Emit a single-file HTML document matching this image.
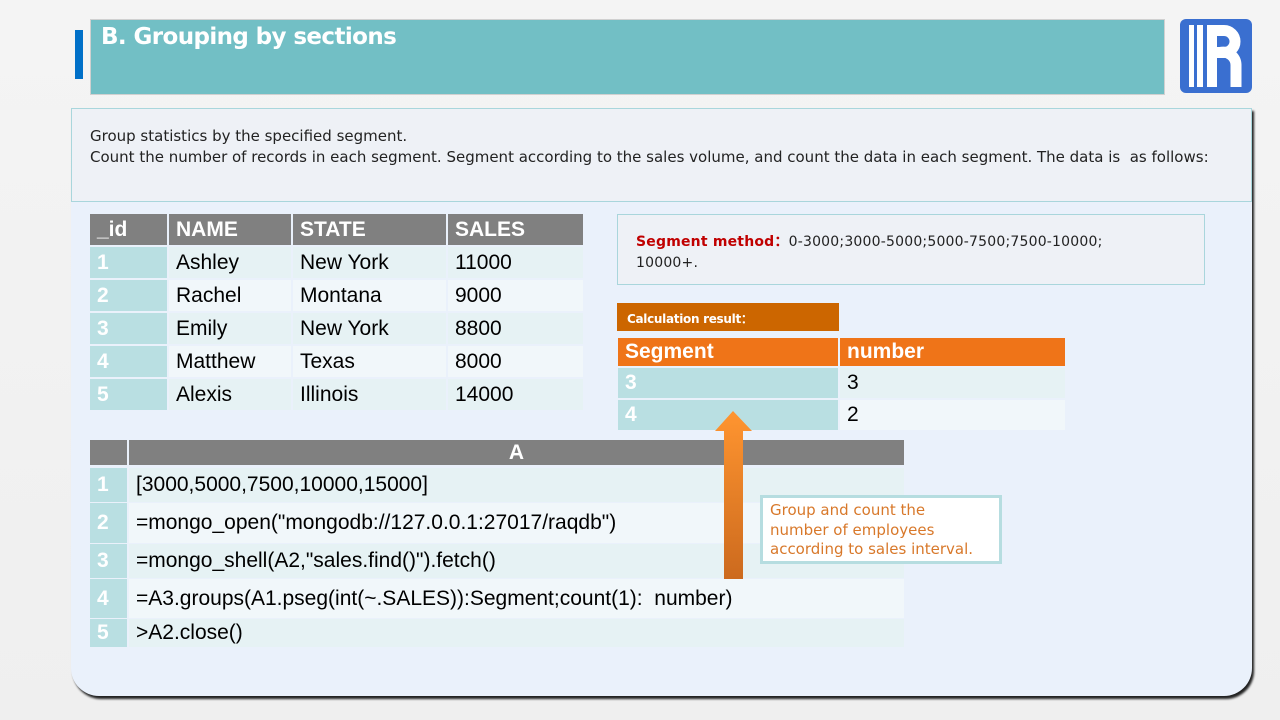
<!DOCTYPE html>
<html><head><meta charset="utf-8"><style>
*{margin:0;padding:0;box-sizing:border-box}
body{width:1280px;height:720px;overflow:hidden;background:linear-gradient(180deg,#f4f4f4,#efefef);position:relative;font-family:"Liberation Sans",Arial,sans-serif}
.a{position:absolute}
.cell{position:absolute;font-size:21px;color:#000;padding-left:7px;display:flex;align-items:center}
.num{color:#fff;font-weight:bold}
.hd{background:#808080;color:#fff;font-weight:bold}
</style></head><body>
<div class="a" style="left:75px;top:30px;width:8px;height:49px;background:#0070c8"></div>
<div class="a" style="left:90px;top:19px;width:1075px;height:76px;background:#72bfc5;border:1px solid #d0d0d0"></div>
<div class="a" style="left:101px;top:24px;color:#fff;font:bold 23px 'DejaVu Sans',sans-serif;letter-spacing:-0.6px">B. Grouping by sections</div>
<svg class="a" style="left:1180px;top:19px" width="72" height="74" viewBox="0 0 72 74">
<rect x="0" y="0" width="72" height="74" rx="6" fill="#3a6fd0"/>
<rect x="9" y="6" width="5" height="62" fill="#fff"/><rect x="17" y="6" width="6" height="62" fill="#fff"/>
<rect x="27" y="6" width="10" height="62" fill="#fff"/>
<path d="M32 11.5 H44 A11 11 0 0 1 44 33.5 H32" fill="none" stroke="#fff" stroke-width="11"/>
<path d="M40 33.5 A13 13 0 0 1 56 46 V68" fill="none" stroke="#fff" stroke-width="11"/>
</svg>
<div class="a" style="left:71px;top:108px;width:1181px;height:588px;background:#eaf1fb;border-radius:0 0 28px 28px;box-shadow:2px 3px 2px #222"></div>
<div class="a" style="left:71px;top:108px;width:1181px;height:94px;background:#eef1f6;border:1px solid #a9d6dc"></div>
<div class="a" style="left:90px;top:126px;font:15px 'DejaVu Sans',sans-serif;color:#222;line-height:21px;letter-spacing:0">Group statistics by the specified segment.<br>Count the number of records in each segment. Segment according to the sales volume, and count the data in each segment. The data is &nbsp;as follows:</div>

<div class="cell hd" style="left:90px;top:214px;width:77px;height:31px">_id</div>
<div class="cell hd" style="left:169px;top:214px;width:122px;height:31px">NAME</div>
<div class="cell hd" style="left:293px;top:214px;width:153px;height:31px">STATE</div>
<div class="cell hd" style="left:448px;top:214px;width:135px;height:31px">SALES</div>
<div id="lt"></div>

<div class="a" style="left:617px;top:214px;width:588px;height:71px;background:#eef1f6;border:1px solid #a9d6dc"></div>
<div class="a" style="left:636px;top:232px;font:14px 'DejaVu Sans',sans-serif;color:#222;line-height:21px;letter-spacing:0.2px"><b style="color:#c00000">Segment method：</b>0-3000;3000-5000;5000-7500;7500-10000;<br>10000+.</div>
<div class="a" style="left:617px;top:303px;width:222px;height:28px;background:#cc6600;color:#fff;font:bold 12px 'DejaVu Sans',sans-serif;padding:7px 0 0 10px;letter-spacing:-0.3px">Calculation result：</div>
<div class="cell" style="left:618px;top:338px;width:220px;height:28px;background:#ef7418;color:#fff;font-weight:bold">Segment</div>
<div class="cell" style="left:840px;top:338px;width:225px;height:28px;background:#ef7418;color:#fff;font-weight:bold">number</div>
<div class="cell num" style="left:618px;top:368px;width:220px;height:30px;background:#b9dfe2">3</div>
<div class="cell" style="left:840px;top:368px;width:225px;height:30px;background:#e6f2f4">3</div>
<div class="cell num" style="left:618px;top:400px;width:220px;height:30px;background:#b9dfe2">4</div>
<div class="cell" style="left:840px;top:400px;width:225px;height:30px;background:#f1f7fa">2</div>

<div class="cell hd" style="left:90px;top:440px;width:37px;height:25px"></div>
<div class="cell hd" style="left:129px;top:440px;width:775px;height:25px;justify-content:center;padding:0">A</div>
<div id="ct"></div>

<svg class="a" style="left:710px;top:408px" width="46" height="175">
<defs><linearGradient id="g" x1="0" y1="0" x2="0" y2="1"><stop offset="0" stop-color="#ff9530"/><stop offset="1" stop-color="#cc6a1e"/></linearGradient></defs>
<path d="M23 3 L42 23 H33 V171 H14 V23 H5 Z" fill="url(#g)"/>
</svg>
<div class="a" style="left:760px;top:495px;width:242px;height:69px;background:#fff;border:3px solid #b6dde0;padding:3px 0 0 7px;font:15px 'DejaVu Sans',sans-serif;color:#d8782a;line-height:19.5px;letter-spacing:0">Group and count the<br>number of employees<br>according to sales interval.</div>

<script>
var rows=[["1","Ashley","New York","11000"],["2","Rachel","Montana","9000"],["3","Emily","New York","8800"],["4","Matthew","Texas","8000"],["5","Alexis","Illinois","14000"]];
var xs=[[90,77],[169,122],[293,153],[448,135]],h="";
rows.forEach(function(r,i){var y=247+i*33;var bg=i%2?"#f1f7fa":"#e6f2f4";
r.forEach(function(t,j){h+='<div class="cell'+(j==0?' num':'')+'" style="left:'+xs[j][0]+'px;top:'+y+'px;width:'+xs[j][1]+'px;height:31px;background:'+(j==0?'#b9dfe2':bg)+'">'+t+'</div>';});});
document.getElementById('lt').outerHTML=h;
var code=["[3000,5000,7500,10000,15000]",'=mongo_open("mongodb://127.0.0.1:27017/raqdb")','=mongo_shell(A2,"sales.find()").fetch()',"=A3.groups(A1.pseg(int(~.SALES)):Segment;count(1): &nbsp;number)",">A2.close()"];
var ys=[[468,34],[503,40],[544,34],[579,39],[619,28]];h="";
code.forEach(function(c,i){var bg=i%2?"#f1f7fa":"#e6f2f4";
h+='<div class="cell num" style="left:90px;top:'+ys[i][0]+'px;width:37px;height:'+ys[i][1]+'px;background:#b9dfe2">'+(i+1)+'</div>';
h+='<div class="cell" style="left:129px;top:'+ys[i][0]+'px;width:775px;height:'+ys[i][1]+'px;background:'+bg+'">'+c+'</div>';});
document.getElementById('ct').outerHTML=h;
</script>
</body></html>
